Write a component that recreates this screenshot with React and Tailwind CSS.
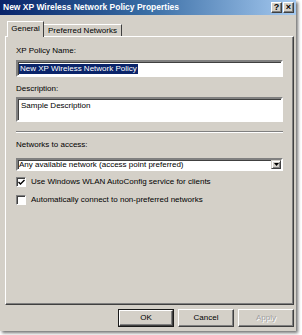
import React from 'react';

const FONT = "font-['Liberation_Sans',Arial,sans-serif]";

function Sunken({ className = '', children }) {
  return (
    <div
      className={`border-2 border-t-[#808080] border-l-[#808080] border-r-white border-b-white bg-white text-[8px] leading-[10px] shadow-[inset_1px_1px_0_#404040] ${className}`}
    >
      {children}
    </div>
  );
}

function Checkbox({ checked, label }) {
  return (
    <div className="flex h-[10px] items-center">
      <div className="flex h-[10px] w-[10px] items-center justify-center border border-t-[#808080] border-l-[#808080] border-r-white border-b-white bg-white shadow-[inset_1px_1px_0_#404040]">
        {checked && (
          <svg width="7" height="7" viewBox="0 0 7 7">
            <path d="M0.5 3 L2.5 5 L6.5 1" fill="none" stroke="#000" strokeWidth="1.4" />
          </svg>
        )}
      </div>
      <span className="ml-[5px] text-[8px] leading-[10px] text-black">{label}</span>
    </div>
  );
}

function Button({ children, isDefault, disabled }) {
  return (
    <div className={`h-[18px] w-[56px] ${isDefault ? 'border border-[#1a1a1a]' : ''}`}>
      <div className="flex h-full w-full items-center justify-center border border-t-white border-l-white border-r-[#404040] border-b-[#404040] bg-[#d4d0c8] shadow-[inset_-1px_-1px_0_#808080]">
        <span className={`text-[8px] leading-none ${disabled ? 'text-[#a0a0a0] [text-shadow:1px_1px_0_#fff]' : 'text-black'}`}>
          {children}
        </span>
      </div>
    </div>
  );
}

function TitleButton({ children }) {
  return (
    <div className="flex h-[11px] w-[11px] items-center justify-center border border-t-white border-l-white border-r-[#404040] border-b-[#404040] bg-[#d4d0c8] shadow-[inset_-1px_-1px_0_#808080]">
      <span className="text-[9px] font-bold leading-none text-black">{children}</span>
    </div>
  );
}

export default function App() {
  return (
    <div className={`h-[335px] w-[302px] bg-white ${FONT}`}>
      <div className="flex h-[331px] w-[296px] flex-col bg-[#d4d0c8] shadow-[2px_2px_3px_rgba(0,0,0,0.55)]">
        {/* title bar */}
        <div className="flex h-[15px] items-center justify-between bg-gradient-to-r from-[#0a246a] via-[#3a6ea5] to-[#a6caf0] pl-[3px] pr-[2px]">
          <span className="text-[8.5px] font-bold leading-none text-white">New XP Wireless Network Policy Properties</span>
          <div className="flex gap-[1px]">
            <TitleButton>?</TitleButton>
            <TitleButton>×</TitleButton>
          </div>
        </div>

        {/* tabs */}
        <div className="px-[5px] pt-[5px]">
          <div className="relative z-10 flex h-[16px] items-end pl-[2px]">
            <div className="-mb-[1px] flex h-[16px] w-[37px] items-center justify-center border border-b-0 border-t-white border-l-white border-r-[#404040] bg-[#d4d0c8] pb-[1px]">
              <span className="text-[8px] leading-none text-black">General</span>
            </div>
            <div className="flex h-[12px] w-[78px] items-center justify-center border border-b-0 border-l-0 border-t-white border-r-[#404040] bg-[#d4d0c8]">
              <span className="text-[8px] leading-none text-black">Preferred Networks</span>
            </div>
          </div>

          {/* panel */}
          <div className="h-[269px] w-[289px] border border-t-white border-l-white border-r-[#404040] border-b-[#404040] shadow-[inset_-1px_-1px_0_#808080]">
            <div className="pl-[10px] pt-[9px]">
              <div className="h-[10px] text-[8px] leading-[10px] text-black">XP Policy Name:</div>
              <Sunken className="mt-[4px] flex h-[17px] w-[267px] items-center pl-[1px]">
                <span className="bg-[#0a246a] px-[1px] text-white">New XP Wireless Network Policy</span>
              </Sunken>

              <div className="mt-[7px] h-[10px] text-[8px] leading-[10px] text-black">Description:</div>
              <Sunken className="mt-[3px] h-[25px] w-[267px] pl-[3px] pt-[2px] text-black">
                Sample Description
              </Sunken>

              <div className="mt-[9px] h-[2px] w-[267px] border-t border-b border-t-[#808080] border-b-white" />

              <div className="mt-[7px] h-[10px] text-[8px] leading-[10px] text-black">Networks to access:</div>
              <Sunken className="mt-[8px] flex h-[13px] w-[267px] items-center justify-between pl-[1px]">
                <span className="leading-none text-black">Any available network (access point preferred)</span>
                <div className="flex h-[9px] w-[10px] items-center justify-center border border-t-[#d4d0c8] border-l-[#d4d0c8] border-r-[#404040] border-b-[#404040] bg-[#d4d0c8] shadow-[inset_1px_1px_0_#fff,inset_-1px_-1px_0_#808080]">
                  <svg width="5" height="3" viewBox="0 0 5 3">
                    <path d="M0 0 H5 L2.5 3 Z" fill="#000" />
                  </svg>
                </div>
              </Sunken>

              <div className="mt-[6px]">
                <Checkbox checked label="Use Windows WLAN AutoConfig service for clients" />
              </div>
              <div className="mt-[8px]">
                <Checkbox label="Automatically connect to non-preferred networks" />
              </div>
            </div>
          </div>
        </div>

        {/* buttons */}
        <div className="mt-[4px] flex justify-end gap-[4px] pr-[2px]">
          <Button isDefault>OK</Button>
          <Button>Cancel</Button>
          <Button disabled>Apply</Button>
        </div>
      </div>
    </div>
  );
}
